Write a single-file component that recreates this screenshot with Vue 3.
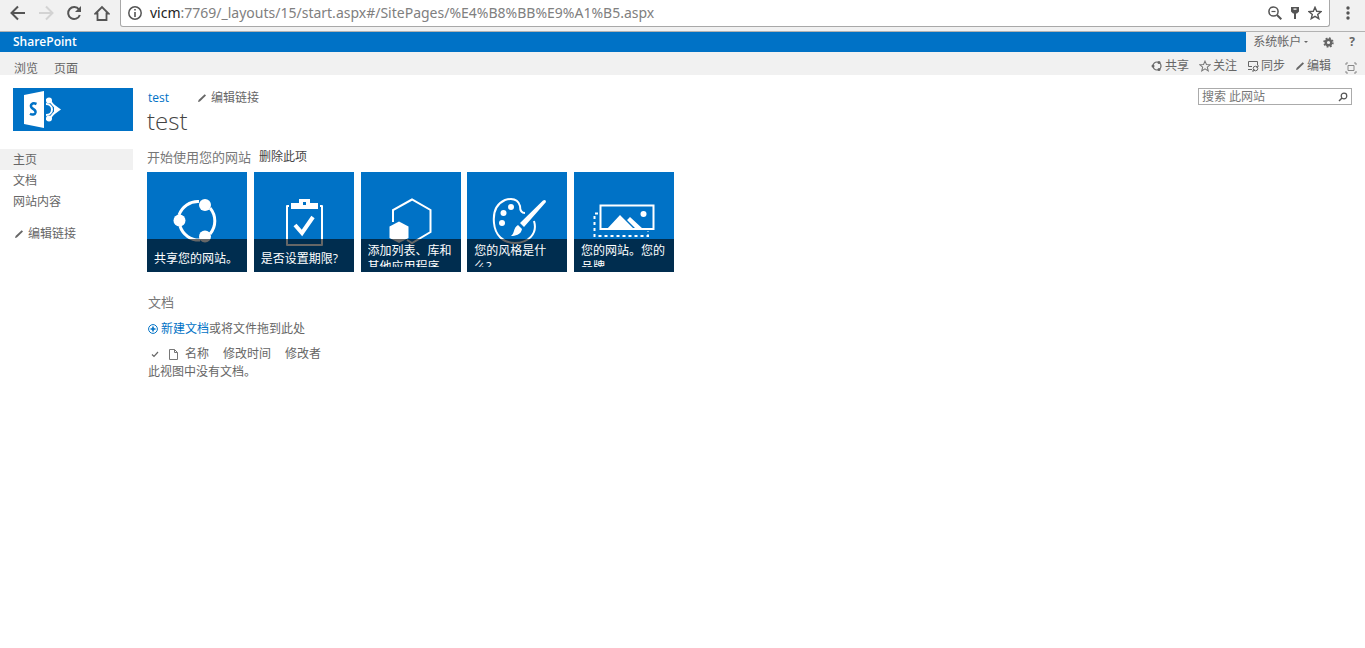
<script setup>
import { ref } from 'vue'

const url = ref('vicm:7769/_layouts/15/start.aspx#/SitePages/%E4%B8%BB%E9%A1%B5.aspx')
const tiles = [
  { icon: 'share', text: '共享您的网站。' },
  { icon: 'task', text: '是否设置期限?' },
  { icon: 'apps', text: '添加列表、库和其他应用程序。' },
  { icon: 'style', text: '您的风格是什么?' },
  { icon: 'brand', text: '您的网站。您的品牌。' },
]
const nav = ['主页', '文档', '网站内容']
</script>

<template>
  <div class="page">
    <header class="browser">
      <div class="browser-nav">
        <button type="button" aria-label="后退">
          <svg width="16" height="16" viewBox="0 0 16 16" fill="none" stroke="#555" stroke-width="2"><path d="M15 8H2M8 1.500L1.500 8L8 14.500" /></svg>
        </button>
        <button type="button" aria-label="前进">
          <svg width="16" height="16" viewBox="0 0 16 16" fill="none" stroke="#d3d3d3" stroke-width="2"><path d="M1 8H14M8 1.500L14.500 8L8 14.500" /></svg>
        </button>
        <button type="button" aria-label="重新加载">
          <svg width="16" height="16" viewBox="0 0 16 16"><path d="M13 4.500A6 6 0 1 0 13.800 10" fill="none" stroke="#555" stroke-width="2" /><path d="M15 1V7H9Z" fill="#555" /></svg>
        </button>
        <button type="button" aria-label="主页">
          <svg width="16" height="16" viewBox="0 0 16 16" fill="none" stroke="#555" stroke-width="1.800"><path d="M1.500 8.500L8 2L14.500 8.500H12.500V15H3.500V8.500Z" /></svg>
        </button>
      </div>
      <div class="omnibox">
        <svg width="14" height="14" viewBox="0 0 14 14"><circle cx="7" cy="7" r="6.200" fill="none" stroke="#555" stroke-width="1.500" /><path d="M7 6V11M7 3V4.600" stroke="#555" stroke-width="1.600" /></svg>
        <a class="url" href="#"><span class="host">{{ url.slice(0, 4) }}</span>{{ url.slice(4) }}</a>
        <button type="button" aria-label="缩放">
          <svg width="14" height="14" viewBox="0 0 14 14" fill="none" stroke="#555"><circle cx="5.500" cy="5.500" r="4.600" stroke-width="1.500" /><path d="M9 9L13.300 13.300" stroke-width="2" /><path d="M3.500 5.500H7.500" stroke-width="1.200" /></svg>
        </button>
        <button type="button" aria-label="密码">
          <svg width="10" height="14" viewBox="0 0 10 14" fill="#555"><path fill-rule="evenodd" d="M1 1H9V5.500L7 7.500H6V13H4V7.500H3L1 5.500ZM3.500 2.500V3.700H6.500V2.500Z" /></svg>
        </button>
        <button type="button" aria-label="收藏">
          <svg width="14" height="14" viewBox="0 0 14 14" fill="none" stroke="#555" stroke-width="1.400"><path d="M7 1.300L8.700 5.300L13 5.600L9.700 8.400L10.800 12.700L7 10.400L3.200 12.700L4.300 8.400L1 5.600L5.300 5.300Z" /></svg>
        </button>
      </div>
      <button class="menu" type="button" aria-label="菜单">
        <svg width="4" height="14" viewBox="0 0 4 14" fill="#555"><circle cx="2" cy="2" r="1.700" /><circle cx="2" cy="7" r="1.700" /><circle cx="2" cy="12" r="1.700" /></svg>
      </button>
    </header>

    <div class="suite">
      <a class="brand" href="#">SharePoint</a>
      <div class="account">
        <button type="button">系统帐户<span class="caret"></span></button>
        <button type="button" aria-label="设置">
          <svg width="11" height="11" viewBox="0 0 12 12" fill="none" stroke="#666"><circle cx="6" cy="6" r="3" stroke-width="2.500" /><circle cx="6" cy="6" r="4.800" stroke-width="1.800" stroke-dasharray="1.900 1.870" /></svg>
        </button>
        <button class="help" type="button">?</button>
      </div>
    </div>

    <div class="ribbon">
      <nav class="tabs"><a href="#">浏览</a><a href="#">页面</a></nav>
      <div class="actions">
        <button type="button">
          <svg width="12" height="12" viewBox="0 0 12 12" fill="none" stroke="#666"><circle cx="6" cy="6" r="4" stroke-width="1.200" /><g fill="#666" stroke="none"><circle cx="2" cy="6" r="1.500" /><circle cx="8" cy="2.500" r="1.500" /><circle cx="8" cy="9.500" r="1.500" /></g></svg>共享
        </button>
        <button type="button">
          <svg width="12" height="12" viewBox="0 0 14 14" fill="none" stroke="#777" stroke-width="1.200"><path d="M7 1.300L8.700 5.300L13 5.600L9.700 8.400L10.800 12.700L7 10.400L3.200 12.700L4.300 8.400L1 5.600L5.300 5.300Z" /></svg>关注
        </button>
        <button type="button">
          <svg width="12" height="12" viewBox="0 0 12 12" fill="none" stroke="#666"><path d="M1.500 4V1.500H10.500V5M1.500 4V6.500H5M1 9.500H5" /><circle cx="8.500" cy="8.500" r="2.300" /><path d="M11 5V7H9M6 12V10H8" /></svg>同步
        </button>
        <button type="button">
          <svg width="10" height="10" viewBox="0 0 10 10" fill="#666"><path d="M1 9L1.600 7.100L7.700 1.200L9 2.500L2.900 8.400Z" /></svg>编辑
        </button>
        <button class="focus" type="button" aria-label="着重于内容">
          <svg width="12" height="12" viewBox="0 0 12 12" fill="none" stroke="#888"><path d="M3 3.500H9V8.500H3ZM1 3V1H3M9 1H11V3M11 9V11H9M3 11H1V9" /></svg>
        </button>
      </div>
    </div>

    <div class="body">
      <aside class="side">
        <a class="logo" href="#" aria-label="SharePoint">
          <svg width="40" height="37" viewBox="0 0 40 37">
            <path d="M23 9H26C28 11 29 13 33 17M23 28H26C28 26 29 24 33 20M23 13C26 13 29 15 29 18.500C29 22 26 24 23 24" fill="none" stroke="#fff" stroke-width="2" />
            <g fill="#fff"><circle cx="26" cy="9.500" r="3" /><circle cx="26" cy="27.500" r="3" /><path d="M31 13.500L38 18.500L31 23.500Z" /><path d="M1 4L21 0V37L1 33Z" /></g>
            <path d="M13.500 13C9 11 7 14 8.500 16.500C10 18.500 13 18.500 12.500 21.500C12 24 9 24 7 22.800" fill="none" stroke="#0072c6" stroke-width="2.500" />
          </svg>
        </a>
        <nav class="quick">
          <a v-for="(n, i) in nav" :key="n" href="#" :class="{ current: i === 0 }">{{ n }}</a>
        </nav>
        <a class="edit" href="#">
          <svg width="10" height="10" viewBox="0 0 10 10" fill="#666"><path d="M1 9L1.600 7.100L7.700 1.200L9 2.500L2.900 8.400Z" /></svg>编辑链接
        </a>
      </aside>

      <main class="content">
        <div class="top">
          <div class="crumbs">
            <a class="link" href="#">test</a>
            <a class="edit-link" href="#">
              <svg width="10" height="10" viewBox="0 0 10 10" fill="#666"><path d="M1 9L1.600 7.100L7.700 1.200L9 2.500L2.900 8.400Z" /></svg>编辑链接
            </a>
          </div>
          <form class="search" @submit.prevent>
            <input type="text" aria-label="搜索" placeholder="搜索 此网站" />
            <button type="submit" aria-label="搜索此网站">
              <svg width="10" height="10" viewBox="0 0 10 10" fill="none" stroke="#555"><circle cx="6" cy="4" r="2.800" stroke-width="1.200" /><path d="M4 6L1 9" stroke-width="1.500" /></svg>
            </button>
          </form>
        </div>
        <h1>test</h1>

        <div class="started"><h2>开始使用您的网站</h2><button type="button">删除此项</button></div>
        <div class="tiles">
          <a v-for="t in tiles" :key="t.icon" class="tile" href="#">
            <svg v-if="t.icon === 'share'" class="art" viewBox="0 0 100 100">
              <g fill="none" stroke="#fff" stroke-width="3"><path d="M32 43A20 20 0 0 1 52 29.500M63 36A20 20 0 0 1 63 62M53 68A20 20 0 0 1 33 54" /></g>
              <g fill="#fff"><circle cx="32.500" cy="48.500" r="6" /><circle cx="58" cy="33" r="6" /><circle cx="58" cy="64.500" r="6" /></g>
            </svg>
            <svg v-else-if="t.icon === 'task'" class="art" viewBox="0 0 100 100">
              <path d="M35 34H33V73H68V34H66" fill="none" stroke="#fff" stroke-width="2" stroke-linejoin="round" />
              <path fill="#fff" fill-rule="evenodd" d="M45 27H56V31H64V37H37V31H45ZM49 30V33H52V30Z" />
              <path d="M41 53L48 61L59 45" fill="none" stroke="#fff" stroke-width="4" />
            </svg>
            <svg v-else-if="t.icon === 'apps'" class="art" viewBox="0 0 100 100">
              <path d="M32 50V38L51 27.500L69.500 38V60L51 71L46 68" fill="none" stroke="#fff" stroke-width="2" />
              <path d="M28.500 54.500L38 49.500L47.500 54.500V66L38 71L28.500 66Z" fill="#fff" />
            </svg>
            <svg v-else-if="t.icon === 'style'" class="art" viewBox="0 0 100 100">
              <path d="M58 41C54 41 53 38 53 34C51 27 45 26 38 28C29 32 26 41 27 51C28 63 36 71 48 71C61 71 71 62 67 49" fill="none" stroke="#fff" stroke-width="2" />
              <g fill="#fff"><circle cx="35" cy="51" r="3" /><circle cx="36.500" cy="41" r="3" /><circle cx="44" cy="35" r="3" /><path d="M53 51L76 28.500Q79 27 79 30L57 55ZM51 53L55 57C54 63 48 64 44 64C48 61 46 56 51 53Z" /></g>
            </svg>
            <svg v-else class="art" viewBox="0 0 100 100">
              <path d="M26.500 33.500H79.500V57H26.500Z" fill="none" stroke="#fff" stroke-width="2" />
              <path d="M24 41.500H20.500V64H74V59" fill="none" stroke="#fff" stroke-width="2" stroke-dasharray="3 3" />
              <g fill="#fff"><path d="M33 57L46 43L60 57ZM53 48L56 45L69 57H62Z" /><circle cx="69.500" cy="42" r="3" /></g>
            </svg>
            <span class="caption"><span class="clip"><span class="label">{{ t.text }}</span></span></span>
          </a>
        </div>

        <h2 class="docs">文档</h2>
        <p class="new">
          <svg width="10" height="10" viewBox="0 0 10 10" fill="none" stroke="#0072c6"><circle cx="5" cy="5" r="4.400" /><path d="M5 2.500V7.500M2.500 5H7.500" stroke-width="1.600" /></svg>
          <span><a class="link" href="#">新建文档</a>或将文件拖到此处</span>
        </p>
        <table>
          <thead>
            <tr>
              <th class="tick"><svg width="8" height="8" viewBox="0 0 8 8" fill="none" stroke="#666" stroke-width="1.200"><path d="M1 4.500L3 6.500L7 2" /></svg></th>
              <th class="type"><svg width="9" height="11" viewBox="0 0 9 11" fill="none" stroke="#777"><path d="M.5 .5H5.500L8.500 3.500V10.500H.5ZM5.500 .5V3.500H8.500" /></svg></th>
              <th>名称</th><th>修改时间</th><th>修改者</th>
            </tr>
          </thead>
          <tbody><tr><td colspan="5">此视图中没有文档。</td></tr></tbody>
        </table>
      </main>
    </div>
  </div>
</template>

<style>
body { margin: 0; background: #fff; }
</style>

<style scoped>
.page { font: 12px/16px "Open Sans", "Noto Sans CJK SC", sans-serif; color: #666; }
.page * { box-sizing: border-box; }
a { color: inherit; text-decoration: none; }
button { border: 0; padding: 0; background: none; font: inherit; color: inherit; display: inline-flex; align-items: center; white-space: nowrap; }
svg { display: block; flex: none; }
h1, h2, p { margin: 0; font-weight: 400; }

.browser { display: flex; height: 32px; background: #f1f1f1; border-bottom: 1px solid #b2b2b2; }
.browser-nav { display: flex; gap: 12px; width: 120px; height: 26px; padding-left: 10px; flex: none; }
.omnibox { flex: 1; display: flex; align-items: center; gap: 8px; height: 27px; padding: 0 7px; background: #fff; border: 1px solid #a8a8a8; border-top: 0; border-radius: 0 0 3px 3px; }
.url { flex: 1; font: 14px/20px "Noto Sans", sans-serif; color: #808080; }
.host { color: #222; }
.menu { width: 35px; height: 26px; justify-content: center; flex: none; }

.suite { display: flex; height: 20px; background: #f1f1f1; }
.brand { flex: 1; padding-left: 13px; background: #0072c6; color: #fff; line-height: 20px; font-weight: 600; }
.account { display: flex; align-items: center; gap: 15px; padding: 0 10px 0 7px; }
.caret { margin-left: 3px; border: 2px solid transparent; border-top-color: #666; border-bottom: 0; }
.help { font-weight: 700; }

.ribbon { display: flex; justify-content: space-between; height: 23px; padding: 0 8px 0 14px; background: #f1f1f1; }
.tabs { display: flex; gap: 16px; padding-top: 9px; }
.actions { display: flex; gap: 10px; align-items: center; height: 27px; }
.actions button { gap: 2px; }
.actions .focus { padding: 4px 0 0 4px; }

.body { display: flex; gap: 14px; padding-top: 13px; }
.side { width: 133px; flex: none; }
.logo { display: block; height: 43px; margin: 0 0 18px 13px; padding: 3px 10px; background: #0072c6; }
.quick a { display: block; height: 21px; padding-left: 13px; line-height: 22px; }
.quick .current { background: #f1f1f1; }
.edit { display: flex; align-items: center; gap: 4px; margin: 14px 0 0 14px; }

.content { flex: 1; padding-right: 13px; }
.top { display: flex; justify-content: space-between; }
.crumbs { display: flex; gap: 28px; padding-left: 1px; height: 20px; align-items: center; }
.edit-link { display: flex; align-items: center; gap: 4px; }
.link { color: #0072c6; }
.search { display: flex; width: 154px; height: 17px; border: 1px solid #ababab; }
.search input { flex: 1; min-width: 0; border: 0; padding: 1px 3px 0; outline: 0; background: none; font: inherit; }
.search input::placeholder { color: #777; opacity: 1; }
.search button { width: 13px; }
h1 { font-size: 24px; line-height: 26px; font-weight: 300; color: #444; }
.started { display: flex; gap: 8px; margin-top: 14px; color: #777; }
.started button { color: #444; }
h2 { font-size: 13px; line-height: 18px; color: #777; }
.tiles { display: flex; justify-content: space-between; max-width: 527px; margin-top: 6px; }
.tile { position: relative; width: 100px; height: 100px; background: #0072c6; color: #fff; }
.art { width: 100%; height: 100%; }
.caption { position: absolute; left: 0; right: 0; bottom: 0; height: 33px; padding: 4px 5px 5px 7px; background: rgba(0, 0, 0, .6); }
.clip { display: flex; flex-direction: column; height: 24px; overflow: hidden; }
.label { margin-top: auto; flex: none; }
.docs { margin: 21px 0 0 1px; }
.new { display: flex; align-items: center; gap: 3px; margin: 10px 0 8px 1px; }
table { border-collapse: collapse; margin-left: 1px; }
th { padding: 0 14px 0 0; font-weight: 400; text-align: left; line-height: 18px; }
td { padding: 0; line-height: 18px; }
.tick { padding: 0 10px 0 3px; }
.type { padding-right: 7px; }
</style>
